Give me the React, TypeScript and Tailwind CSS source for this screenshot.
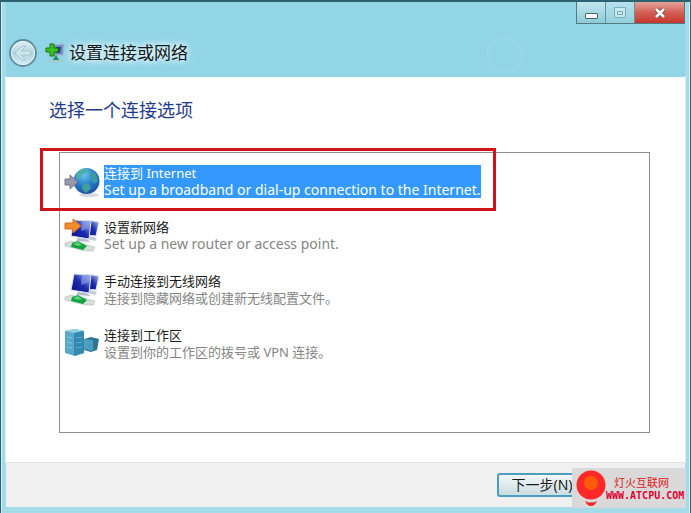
import type { ReactNode } from "react";

const Globe = () => (
  <svg viewBox="0 0 36 36" className="size-9 shrink-0" aria-hidden="true">
    <defs>
      <radialGradient id="sea" cx="0.4" cy="0.25" r="0.8">
        <stop offset="0" stopColor="#6fc4ee" />
        <stop offset="0.5" stopColor="#2a80cc" />
        <stop offset="1" stopColor="#1b4c9c" />
      </radialGradient>
    </defs>
    <ellipse cx="25" cy="31" rx="10" ry="2" fill="#d4dbe0" />
    <circle cx="22.5" cy="17" r="13" fill="url(#sea)" />
    <path d="M13 9 Q18 4 24 5 L22 9 L18 11 L16 15 L12 14Z" fill="#4fb0a8" />
    <path d="M26 7 L32 10 L34 17 L30 20 L27 15Z" fill="#3c9aa8" />
    <path d="M19 19 L25 20 L27 24 L22 29 L18 25Z" fill="#3f9fa0" />
    <path d="M1 15 H6 V11 L14 18 L6 25 V21 H1Z" fill="#9a97aa" stroke="#77758a" />
  </svg>
);

const Computers = ({ arrow = false }: { arrow?: boolean }) => (
  <svg viewBox="0 0 36 36" className="size-9 shrink-0" aria-hidden="true">
    <defs>
      <linearGradient id="screen" x1="0" y1="1" x2="1" y2="0">
        <stop offset="0" stopColor="#0a0f80" />
        <stop offset="0.5" stopColor="#1c2cae" />
        <stop offset="1" stopColor="#b9caf6" />
      </linearGradient>
    </defs>
    <path d="M22 2 L35 4 L32 18 L22 17Z" fill="url(#screen)" stroke="#dce3ef" />
    <path d="M26 18 L33 20 L31 23 L23 21Z" fill="#c6cbd8" />
    <path d="M10 2 L27 3 L25 21 L7 18Z" fill="url(#screen)" stroke="#dce3ef" />
    <path d="M18 3 L27 3 L25 10 L17 13Z" fill="#8ea2e6" opacity="0.6" />
    <path d="M14 20 L22 21 L27 24 L12 23Z" fill="#b5bdce" />
    <path d="M1 25 L7 23 L31 29 L29 33 L22 33 L1 28Z" fill="#d5ddda" stroke="#b4beb9" strokeWidth="0.6" />
    <path d="M8 25 L14 23 L23 28 L19 32 L7 29Z" fill="#12a23e" />
    <path d="M9 26 L14 24 L18 27 L14 28Z" fill="#60d174" />
    {arrow && <path d="M1 5 H9 V1 L17 8 L9 15 V11 H1Z" fill="#f58a2d" stroke="#d46b1d" />}
  </svg>
);

const Servers = () => (
  <svg viewBox="0 0 36 36" className="size-9 shrink-0" aria-hidden="true">
    <path d="M20 13 L27 11 L35 13 L33 24 L27 26 L20 24Z" fill="#2f7592" />
    <path d="M20 13 L29 14 V25 L20 23Z" fill="#4d9fbd" />
    <path d="M1 5 L11 3 L20 5 V27 L11 30 L1 27Z" fill="#5aa9cb" />
    <path d="M1 5 L11 3 L20 5 L10 7Z" fill="#91d0e3" />
    <path d="M10 7 L20 5 V27 L10 30Z" fill="#3489b0" />
    <path d="M3 11 L8 12 M3 16 L8 17 M3 21 L8 22" stroke="#86c8de" />
    <path d="M12 12 L18 11 M12 17 L18 16 M12 22 L18 21" stroke="#5caecb" />
  </svg>
);

type Option = { title: string; detail: string; icon: ReactNode; selected?: boolean; latin?: boolean };

const options: Option[] = [
  { title: "连接到 Internet", detail: "Set up a broadband or dial-up connection to the Internet.", icon: <Globe />, selected: true, latin: true },
  { title: "设置新网络", detail: "Set up a new router or access point.", icon: <Computers arrow />, latin: true },
  { title: "手动连接到无线网络", detail: "连接到隐藏网络或创建新无线配置文件。", icon: <Computers /> },
  { title: "连接到工作区", detail: "设置到你的工作区的拨号或 VPN 连接。", icon: <Servers /> },
];

function TitleBar() {
  return (
    <header className="relative flex h-[75px] items-end justify-between bg-[#91d5e6] pb-2.5 pl-[3px]">
      <div className="flex items-center">
        <button type="button" aria-label="返回" className="size-7 rounded-full">
          <svg viewBox="0 0 28 28" className="size-7" aria-hidden="true">
            <defs>
              <linearGradient id="back" x1="0" y1="0" x2="0" y2="1">
                <stop offset="0" stopColor="#e6f3f7" />
                <stop offset="0.5" stopColor="#b3d4df" />
                <stop offset="1" stopColor="#d3eef5" />
              </linearGradient>
            </defs>
            <circle cx="14" cy="14" r="13" fill="url(#back)" stroke="#5f8b9b" strokeWidth="1.8" />
            <circle cx="14" cy="14" r="11.5" fill="none" stroke="#e3f5fa" />
            <path d="M6 14 L13 7 H17 L12 12 H22 V16 H12 L17 21 H13Z" fill="#cfe5ec" stroke="#9fc1cc" strokeWidth="0.8" />
          </svg>
        </button>
        <svg viewBox="0 0 20 20" className="ml-2 size-5" aria-hidden="true">
          <path d="M9 2 L19 1 L18 12 L9 12Z" fill="#6d8fc0" stroke="#a6b8d4" />
          <path d="M11 4 L16 4 L15 10 L11 10Z" fill="#253f87" />
          <path d="M7 18 L11 12 L15 18Z" fill="#268c67" />
          <path d="M3 18 H19" stroke="#a5cbd1" strokeWidth="2" />
          <path d="M5 1 H9 V5 H13 V9 H9 V13 H5 V9 H1 V5 H5Z" fill="#39c51f" stroke="#16750f" />
        </svg>
        <h1 className="ml-1 text-[17px] leading-7 text-[#10191d] [text-shadow:0_0_6px_#fff,0_0_10px_#fff]">设置连接或网络</h1>
      </div>
      <svg viewBox="0 0 44 44" className="absolute right-[158px] bottom-0 size-11" aria-hidden="true">
        <circle cx="22" cy="22" r="17" fill="none" stroke="#9bdcea" strokeWidth="5" opacity="0.5" />
      </svg>
      <div className="absolute top-0 right-0 flex h-[22px] border border-t-0 border-[#527b86]">
        <button type="button" aria-label="最小化" className="flex w-[29px] items-center justify-center border-r border-[#63909d] bg-linear-to-b from-[#c2e6ee] to-[#8ccbd8]">
          <span className="mt-1.5 h-[6px] w-[13px] rounded-[1px] border border-[#4c646c] bg-white" />
        </button>
        <button type="button" aria-label="最大化" disabled className="flex w-[29px] items-center justify-center border-r border-[#63909d] bg-linear-to-b from-[#b5e1eb] to-[#94d1de]">
          <span className="flex h-[11px] w-3 items-center justify-center rounded-[1px] border border-[#7caebd] bg-[#c6e8ef]">
            <span className="h-1 w-1.5 border border-[#7caebd]" />
          </span>
        </button>
        <button type="button" aria-label="关闭" className="flex w-[49px] items-center justify-center bg-linear-to-b from-[#e2a39c] via-[#d45f56] to-[#c6342b]">
          <svg viewBox="0 0 14 14" className="size-3.5" aria-hidden="true">
            <path d="M3 3 L11 11 M11 3 L3 11" stroke="#853831" strokeWidth="4.5" />
            <path d="M3 3 L11 11 M11 3 L3 11" stroke="#fff" strokeWidth="2.8" />
          </svg>
        </button>
      </div>
    </header>
  );
}

export default function App() {
  return (
    <div className="relative flex min-h-screen flex-col border-t-2 border-r border-l border-[#2c626f] bg-[#a5dae8] font-['Noto_Sans','Noto_Sans_CJK_SC',sans-serif]">
      <div className="flex grow flex-col border-x border-[#d3f2f8] px-1 pb-1.5">
        <TitleBar />
        <main className="flex grow flex-col bg-white pt-[19px] pr-[35px] pb-[29px] pl-[43px] outline outline-[#d9f2f7]">
          <h2 className="text-[18px] leading-7 text-[#1f3b8f]">选择一个连接选项</h2>
          <div className="relative mt-7 ml-[10px] flex grow flex-col border border-[#8f8f8f] pt-3 pl-1">
            <ul className="flex flex-col gap-[21px]">
              {options.map((option) => (
                <li key={option.title}>
                  <button type="button" aria-pressed={!!option.selected} className="flex h-[33px] items-center gap-1 text-left text-[13px]">
                    {option.icon}
                    <span className={option.selected ? "bg-[#3399ff] text-white" : "text-[#1c1c1c]"}>
                      <span className="block leading-[17px]">{option.title}</span>
                      <span className={option.selected ? "" : "text-[#858585]"}>
                        <span className={option.latin ? "block text-sm leading-4 whitespace-nowrap" : "block leading-4 whitespace-nowrap"}>{option.detail}</span>
                      </span>
                    </span>
                  </button>
                </li>
              ))}
            </ul>
            <div className="pointer-events-none absolute -top-[5px] -left-5 h-[63px] w-[456px] border-3 border-[#d01318]" />
          </div>
        </main>
        <footer className="flex h-[45px] items-center justify-end border-t border-[#dfdfdf] bg-[#f0f0f0] pr-[98px]">
          <button type="button" className="h-6 w-[90px] rounded-[3px] border-2 border-[#4b9ebc] bg-linear-to-b from-[#f3f7f8] to-[#cbdde3] text-sm leading-5 text-[#1b1b1b]">
            下一步(N)
          </button>
        </footer>
      </div>
      <aside className="absolute right-1 bottom-[5px] flex h-10 w-[114px] items-center bg-[#d9d9d9] pl-1">
        <svg viewBox="0 0 30 36" className="h-9 w-[30px] shrink-0" aria-hidden="true">
          <circle cx="15" cy="15" r="14.5" fill="#ff2828" />
          <circle cx="15" cy="13" r="7" fill="#ff5a0a" />
          <path d="M9 31 Q15 34 21 31 Q19 36 15 36 Q11 36 9 31Z" fill="#ff2828" />
        </svg>
        <div className="flex flex-col whitespace-nowrap text-[#e02020]">
          <span className="pl-2 font-['Noto_Sans_CJK_SC',sans-serif] text-[11px] leading-4">灯火互联网</span>
          <span className="font-['DejaVu_Sans_Mono',monospace] text-[10px] leading-3 font-bold text-[#e00035]">WWW.ATCPU.COM</span>
        </div>
      </aside>
    </div>
  );
}
